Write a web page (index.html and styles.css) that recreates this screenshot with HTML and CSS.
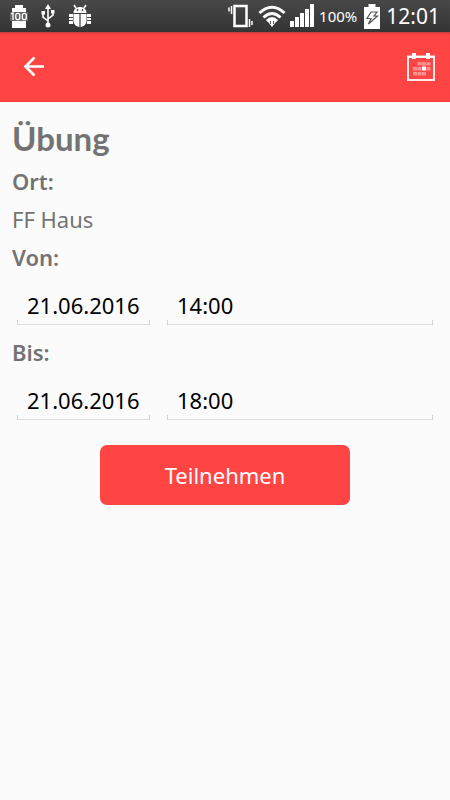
FILE: index.html
```html
<!DOCTYPE html>
<html lang="de">
<head>
<meta charset="utf-8">
<meta name="viewport" content="width=device-width, initial-scale=1">
<title>Übung</title>
<link rel="stylesheet" href="styles.css">
</head>
<body>
<div class="status">
  <div class="status-left">
    <svg width="18" height="24" viewBox="0 0 18 24" aria-hidden="true"><path d="M5 1h8v3h3v20H2V4h3z" fill="#fff"/><path d="M0 8h18v9H0z" fill="#666"/><g fill="none" stroke="#fff" stroke-width="1.300"><path d="M1 10l2-1v7"/><rect x="5.800" y="9.300" width="4" height="6.400" rx="2"/><rect x="12.300" y="9.300" width="4" height="6.400" rx="2"/></g></svg>
    <svg width="14" height="24" viewBox="0 0 14 24" aria-hidden="true"><path d="M7 3v18M2 9v4l5 4M12 8v3l-5 4" fill="none" stroke="#fff" stroke-width="1.600"/><path d="M7 0l3 5H4zM.5 7H4v3.500H.5zM10 6h3.500v3.500H10z" fill="#fff"/><circle cx="7" cy="21" r="2.500" fill="#fff"/></svg>
    <svg width="24" height="24" viewBox="0 0 24 24" aria-hidden="true"><path d="M5.500 9c0-8 13-8 13 0zM5.500 10h5.900v13C8 22.500 5.500 20 5.500 17zM12.600 10h5.900v7c0 3-2.500 5.500-5.900 6z" fill="#fff"/><path d="M8 4L6 1M16 4l2-3" stroke="#fff" stroke-width="1.500"/><path d="M1 10h4v3H1zM1 14h4v2H1zM1 17h4v3H1zM19 10h4v3h-4zM19 14h4v2h-4zM19 17h4v3h-4z" fill="#fff"/><circle cx="9.500" cy="6" r=".9" fill="#444"/><circle cx="14.500" cy="6" r=".9" fill="#444"/></svg>
  </div>
  <div class="status-right">
    <svg width="26" height="24" viewBox="0 0 26 24" aria-hidden="true"><rect x="6.500" y="2" width="12" height="20" fill="none" stroke="#fff" stroke-width="2.500"/><path d="M3.500 2v8M1 3.500v4M21.500 15v8M24 17v4" fill="none" stroke="#fff" stroke-width="1.500"/></svg>
    <svg width="28" height="24" viewBox="0 0 28 24" aria-hidden="true"><g fill="none" stroke="#fff" stroke-width="3"><path d="M1.500 9Q14-2.500 26.500 9M5.500 13.500Q14 5.500 22.500 13.500"/><path d="M9 17Q14 12 19 17"/></g><path d="M8.500 16l5.500 7 5.500-7z" fill="#fff"/><path d="M12.500 17v3M15.500 17v3" stroke="#555"/></svg>
    <svg width="24" height="24" viewBox="0 0 24 24" aria-hidden="true"><path d="M0 17h4v6H0zM5 13h4v10H5zM10 9h4v14h-4zM15 5h4v18h-4zM20 0h4v23h-4z" fill="#fff"/></svg>
    <span class="percent">100%</span>
    <svg width="16" height="25" viewBox="0 0 16 25" aria-hidden="true"><path d="M4.500 0h7v3H16v22H0V3h4.500z" fill="#fff"/><path d="M7 8h6l-3 4h3.500L4.500 20 7 14.500H3z" fill="none" stroke="#555" stroke-width="1.200"/></svg>
    <span class="clock">12:01</span>
  </div>
</div>
<header class="bar">
  <button class="icon-button" type="button" aria-label="Zurück">
    <svg width="24" height="24" viewBox="0 0 24 24"><path d="M22 11.500H3.500M12.500 2.500l-9 9 9 9" fill="none" stroke="#fff" stroke-width="2.600"/></svg>
  </button>
  <button class="icon-button" type="button" aria-label="Kalender">
    <svg width="30" height="30" viewBox="0 0 30 30"><rect x="2" y="4.500" width="26" height="23.500" fill="none" stroke="#fff" stroke-opacity=".88" stroke-width="2"/><path d="M1.500 5h27" stroke="#fff" stroke-width="2"/><path d="M6 1h4v6H6zM20 1h4v6h-4z" fill="#fff"/><path d="M11.500 10h4v3.500h-4zM16 10h4v3.500h-4zM20.500 10h4v3.500h-4zM7 15h4v3.500H7zM11.500 15h4v3.500h-4zM20.500 15h4v3.500h-4zM7 20h4v3.500H7zM11.500 20h4v3.500h-4zM16 20h4v3.500h-4z" fill="#fff" fill-opacity=".42"/><path d="M16 14.500h4v4h-4z" fill="#fff"/></svg>
  </button>
</header>
<main class="content">
  <h1 class="title">Übung</h1>
  <h2 class="label">Ort:</h2>
  <p class="value">FF Haus</p>
  <h2 class="label" id="von">Von:</h2>
  <div class="fields">
    <input class="field" type="text" value="21.06.2016" aria-labelledby="von">
    <input class="field" type="text" value="14:00" aria-labelledby="von">
  </div>
  <h2 class="label" id="bis">Bis:</h2>
  <div class="fields">
    <input class="field" type="text" value="21.06.2016" aria-labelledby="bis">
    <input class="field" type="text" value="18:00" aria-labelledby="bis">
  </div>
  <button class="join" type="button">Teilnehmen</button>
</main>
</body>
</html>
```
FILE: styles.css
```css
* {
  box-sizing: border-box;
}

body {
  margin: 0;
  min-height: 100vh;
  background: #fbfbfb;
  color: #737373;
  font-family: "Noto Sans", sans-serif;
}

svg {
  display: block;
  flex: none;
}

.status {
  display: flex;
  justify-content: space-between;
  align-items: center;
  height: 32px;
  padding: 0 10px;
  background: linear-gradient(#484848, #343434);
  color: #fff;
}

.status-left {
  display: flex;
  align-items: center;
  gap: 13px;
}

.status-right {
  display: flex;
  align-items: center;
  gap: 4px;
}

.percent {
  margin: 0 3px 0 1px;
  font-size: 15px;
}

.clock {
  margin-left: 2px;
  font-size: 21px;
  line-height: 32px;
}

.bar {
  display: flex;
  justify-content: space-between;
  align-items: center;
  height: 70px;
  padding: 0 14px 0 22px;
  background: #ff4444;
  border-bottom: 1px solid #f73d3d;
  box-shadow: inset 0 3px 3px -2px #b83a3a;
}

.icon-button {
  padding: 0;
  border: 0;
  background: none;
}

.content {
  padding: 12px;
}

.title {
  margin: 0;
  font-family: Lato, sans-serif;
  font-size: 33px;
  line-height: 48px;
  font-weight: 700;
}

.label,
.value {
  margin: 0;
  font-size: 22px;
  line-height: 38px;
}

.label {
  font-weight: 600;
}

.value {
  font-weight: 400;
}

.fields {
  display: grid;
  grid-template-columns: 1fr 2fr;
  gap: 17px;
  padding: 9px 5px 8px;
}

.field {
  min-width: 0;
  height: 40px;
  padding: 0 10px;
  border: 0;
  background:
    linear-gradient(#d2d2d2, #d2d2d2) left bottom / 1px 5px no-repeat,
    linear-gradient(#d2d2d2, #d2d2d2) right bottom / 1px 5px no-repeat,
    linear-gradient(#dcdcdc, #dcdcdc) left bottom / 100% 1px no-repeat;
  color: #000;
  font-family: inherit;
  font-size: 22px;
}

.join {
  display: block;
  width: 250px;
  max-width: 100%;
  height: 60px;
  margin: 17px auto 0;
  border: 0;
  border-radius: 7px;
  background: #ff4444;
  color: #fff;
  font-family: inherit;
  font-size: 22px;
}
```
